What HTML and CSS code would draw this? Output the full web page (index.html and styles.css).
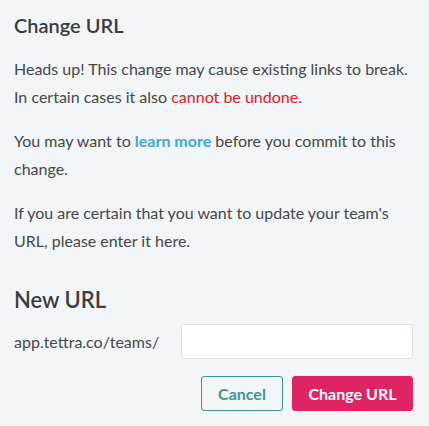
FILE: index.html
```html
<!DOCTYPE html>
<html>
<head>
<meta charset="utf-8">
<link rel="stylesheet" href="styles.css">
</head>
<body>
<div class="page">
  <h2 class="title">Change URL</h2>
  <p class="text">Heads up! This change may cause existing links to break. In certain cases it also <span class="danger">cannot be undone</span>.</p>
  <p class="text">You may want to <a class="link" href="#">learn more</a> before you commit to this change.</p>
  <p class="text">If you are certain that you want to update your team's URL, please enter it here.</p>
  <h2 class="title title-new">New URL</h2>
  <div class="row">
    <span class="prefix">app.tettra.co/teams/</span>
    <input class="input" type="text">
  </div>
  <div class="actions">
    <button class="btn btn-cancel">Cancel</button>
    <button class="btn btn-primary">Change URL</button>
  </div>
</div>
</body>
</html>
```
FILE: styles.css
```css
html, body {
  margin: 0;
  padding: 0;
  background: #f2f6f9;
}
.page {
  font-family: Lato, "Open Sans", sans-serif;
  color: #474747;
  padding: 11px 16px 0 14px;
  width: 399px;
}
.title {
  font-size: 20px;
  font-weight: 600;
  color: #3d3d3d;
  margin: 0 0 16px 0;
  line-height: 28px;
}
.text {
  font-size: 16px;
  line-height: 28px;
  margin: 0 0 16px 0;
}
.danger { color: #d9202a; }
.link {
  color: #3ea6e0;
  font-weight: 700;
  text-decoration: none;
}
.title-new {
  font-size: 22px;
  margin-top: 31px;
  margin-bottom: 10px;
}
.row {
  display: flex;
  align-items: center;
  justify-content: space-between;
}
.prefix {
  font-size: 16px;
}
.input {
  width: 232px;
  height: 35px;
  box-sizing: border-box;
  border: 1px solid #dfe3e6;
  border-radius: 3px;
  background: #fff;
  margin: 0;
  padding: 0 8px;
}
.actions {
  display: flex;
  justify-content: flex-end;
  gap: 9px;
  margin-top: 17px;
}
.btn {
  font-family: Lato, "Open Sans", sans-serif;
  font-size: 16px;
  font-weight: 700;
  height: 35px;
  border-radius: 3px;
  box-sizing: border-box;
  cursor: pointer;
  padding: 0;
}
.btn-cancel {
  width: 82px;
  background: transparent;
  border: 1px solid #3d9690;
  color: #3d9690;
}
.btn-primary {
  width: 121px;
  background: #e02362;
  border: 1px solid #e02362;
  color: #fff;
}
```
